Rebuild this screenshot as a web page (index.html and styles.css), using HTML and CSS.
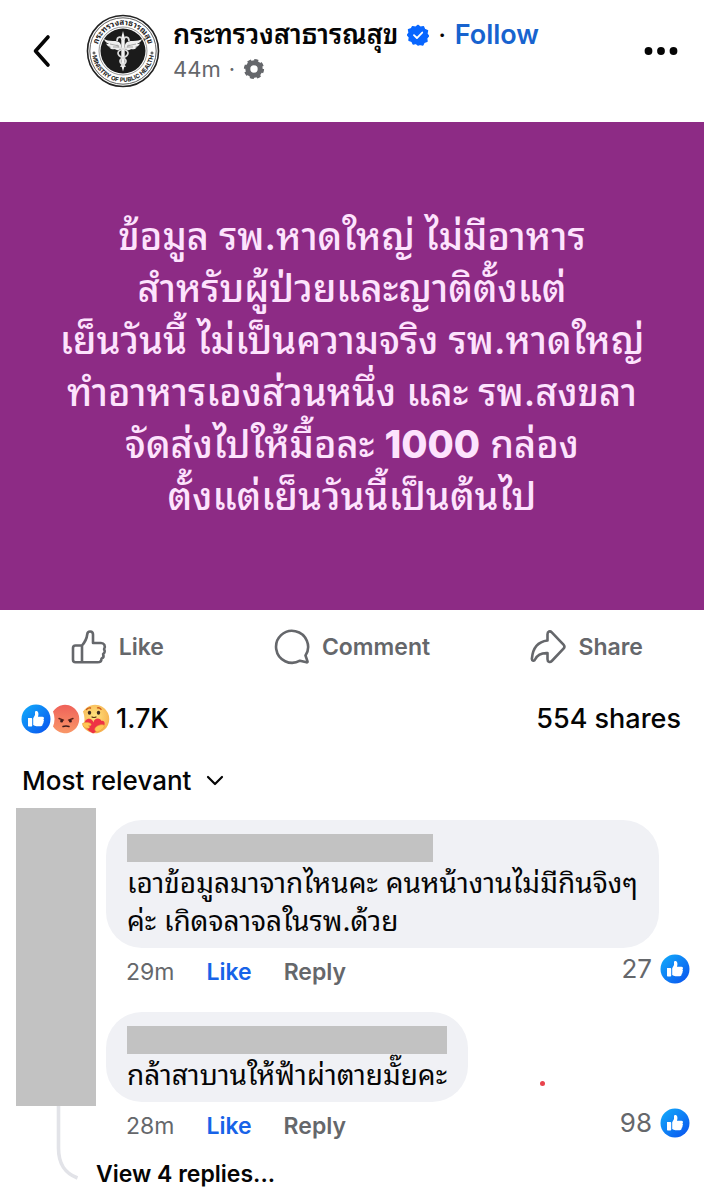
FILE: index.html
```html
<!DOCTYPE html>
<html lang="th">
<head>
<meta charset="utf-8">
<meta name="viewport" content="width=device-width, initial-scale=1">
<title>กระทรวงสาธารณสุข</title>
<link rel="stylesheet" href="styles.css">
</head>
<body>
<svg class="defs" width="0" height="0" aria-hidden="true">
  <defs>
    <linearGradient id="blue" x1="0" y1="0" x2="1" y2="1"><stop offset="0" stop-color="#12aefb"/><stop offset="1" stop-color="#0a50ee"/></linearGradient>
    <linearGradient id="angry" x1="0" y1="0" x2="0" y2="1"><stop offset="0" stop-color="#ef6159"/><stop offset="1" stop-color="#f99768"/></linearGradient>
    <radialGradient id="care" cx=".45" cy=".4" r=".65"><stop offset="0" stop-color="#ffe37e"/><stop offset="1" stop-color="#f6ae4c"/></radialGradient>
    <symbol id="like-badge" viewBox="0 0 30 30">
      <circle cx="15" cy="15" r="14.5" fill="url(#blue)"/>
      <path fill="#fff" d="M7 14.1h3.400c.5 0 .8.3.8.8v6.900c0 .5-.3.8-.8.8H7.800a.8.8 0 0 1-.8-.8zM12.200 14.200l1.800-3.100V8.300c0-1.700 2.900-1.700 3.300.6.300 1.500 0 2.700-.4 3.900h4.400c1.900 0 2.100 2 1.100 2.600.8.700.7 1.900-.1 2.400.5.900.1 1.800-.7 2.200.2 1.300-.6 2.200-1.900 2.200h-4.300c-1.300 0-2.300-.4-3.200-1.100z"/>
    </symbol>
  </defs>
</svg>
<main class="page">
  <header class="header">
    <button class="icon-button" type="button" aria-label="Back">
      <svg width="20" height="34" viewBox="0 0 20 34"><path d="M16 3 3.500 17 16 31" fill="none" stroke="#050505" stroke-width="3.600" stroke-linecap="round" stroke-linejoin="round"/></svg>
    </button>
    <svg class="seal" viewBox="0 0 74 74" role="img" aria-label="Ministry of Public Health">
      <circle cx="37" cy="37" r="35.500" fill="#fff" stroke="#222" stroke-width="1.600"/>
      <circle cx="37" cy="37" r="33.200" fill="none" stroke="#333" stroke-width=".8"/>
      <circle cx="37" cy="37" r="22.500" fill="#1b1b1b"/>
      <circle cx="37" cy="37" r="24" fill="none" stroke="#555" stroke-width=".6"/>
      <path id="arc-top" d="M11 37a26 26 0 0 1 52 0" fill="none"/>
      <path id="arc-bottom" d="M6 37a31 31 0 0 0 62 0" fill="none"/>
      <text class="seal-thai"><textPath href="#arc-top" startOffset="50%">กระทรวงสาธารณสุข</textPath></text>
      <text class="seal-latin"><textPath href="#arc-bottom" startOffset="50%">MINISTRY OF PUBLIC HEALTH</textPath></text>
      <path d="M8 37.500v3M6.500 39h3M66 37.500v3M64.500 39h3" stroke="#333" stroke-width="1"/>
      <path fill="#eee" d="M35 31c-1-4-5-4-8-4-4 0-7-1-9-2 1 3 3 4 5 5-1 0-2 0-3-.5 1 2.500 3 3.500 5 3.500-1 .5-2 .5-2 .5 2 2 5 2 6 1.500 1 1.500 4 1.500 6 0zM39 31c1-4 5-4 8-4 4 0 7-1 9-2-1 3-3 4-5 5 1 0 2 0 3-.5-1 2.500-3 3.500-5 3.500 1 .5 2 .5 2 .5-2 2-5 2-6 1.500-1 1.500-4 1.500-6 0z"/>
      <path fill="#f3f3f3" d="m37 17 1.700 6.500v28L37 57.500l-1.700-6v-28z"/>
      <path d="M31 27c0-5 5-5 5-1M43 27c0-5-5-5-5-1M31 30c0 6 11 4 11 9s-8 4-8 8 5 3 5 6M43 30c0 6-11 4-11 9s8 4 8 8-5 3-5 6" fill="none" stroke="#ddd" stroke-width="1.700"/>
      <path d="M24 30l9 2M50 30l-9 2M27 33h6M47 33h-6" stroke="#777" stroke-width=".6"/>
    </svg>
    <div class="identity">
      <div class="name-row">
        <h1 class="name">กระทรวงสาธารณสุข</h1>
        <svg class="verified" viewBox="0 0 24 24" role="img" aria-label="Verified"><path fill="#0866ff" stroke="#0866ff" stroke-width="1.500" stroke-linejoin="round" d="m12 1.500 2.700 2 3.300-.6 1.200 3.100 3.200 1.200-.7 3.300 1.800 2.500-2.100 2.500.5 3.300-3.200 1.100-1.400 3-3.200-.7L12 23l-2.100-1.800-3.200.7-1.400-3-3.200-1.100.5-3.300-2.100-2.500 1.800-2.500-.7-3.300L4.800 5 6 2.900l3.300.6z"/><path d="m7.600 12.200 3.200 3.100 5.800-6" fill="none" stroke="#fff" stroke-width="2" stroke-linecap="round" stroke-linejoin="round"/></svg>
        <span class="dot">·</span>
        <button class="follow" type="button">Follow</button>
      </div>
      <div class="time-row">
        <span>44m</span><span>·</span>
        <svg width="22" height="22" viewBox="0 0 22 22" role="img" aria-label="Custom audience"><circle cx="11" cy="11" r="6.200" fill="none" stroke="#65676b" stroke-width="5"/><circle cx="11" cy="11" r="8.300" fill="none" stroke="#65676b" stroke-width="3.600" stroke-dasharray="3.700 2.819"/></svg>
      </div>
    </div>
    <button class="icon-button more" type="button" aria-label="More">
      <svg width="34" height="10" viewBox="0 0 34 10" fill="#050505"><circle cx="4.500" cy="5" r="3.900"/><circle cx="17" cy="5" r="3.900"/><circle cx="29.500" cy="5" r="3.900"/></svg>
    </button>
  </header>

  <article class="post">
    <p class="post-text">ข้อมูล รพ.หาดใหญ่ ไม่มีอาหาร<br>สำหรับผู้ป่วยและญาติตั้งแต่<br>เย็นวันนี้ ไม่เป็นความจริง รพ.หาดใหญ่<br>ทำอาหารเองส่วนหนึ่ง และ รพ.สงขลา<br>จัดส่งไปให้มื้อละ <b>1000</b> กล่อง<br>ตั้งแต่เย็นวันนี้เป็นต้นไป</p>
  </article>

  <div class="actions">
    <button class="action" type="button">
      <svg width="36" height="36" viewBox="0 0 36 36"><path d="M11 16.500v16.800M11 16.500H4.500a2.500 2.500 0 0 0-2.500 2.500v11.800a2.500 2.500 0 0 0 2.500 2.500h22c3 0 4-1.500 4-3.600 2-1 2.300-3 1.600-4.500 1.800-1.200 2-3.500 1-5 1.800-3.300 0-6.200-3.100-6.200h-8V5.500c0-4-5.300-4-5.700-.5-.5 4.500-1.800 7.500-5.300 11.500z" fill="none" stroke="#65676b" stroke-width="2.600" stroke-linejoin="round"/></svg>
      <span>Like</span>
    </button>
    <button class="action" type="button">
      <svg width="36" height="36" viewBox="0 0 36 36"><path d="M31.500 26.500A16 16 0 1 0 26 31.700l6.500 1.600c.8.200 1.200-.3 1-1z" fill="none" stroke="#65676b" stroke-width="2.600" stroke-linejoin="round"/></svg>
      <span>Comment</span>
    </button>
    <button class="action" type="button">
      <svg width="36" height="36" viewBox="0 0 36 36"><path d="M17.500 11.500V5.200c0-2.700 2.500-3.700 4.300-1.900L33.500 15.700c1.200 1.300 1.200 2.700 0 4L21.800 32c-1.800 1.900-4.300.9-4.300-1.700v-6.200c-6.500-.3-10 1.500-12.300 6.200-1 2.200-3.500 1.800-3.300-.6.800-10.500 5.600-17 15.600-18.200z" fill="none" stroke="#65676b" stroke-width="2.600" stroke-linejoin="round"/></svg>
      <span>Share</span>
    </button>
  </div>

  <div class="summary">
    <div class="reactions">
      <svg class="badge" role="img" aria-label="Like"><use href="#like-badge"/></svg>
      <svg class="badge" viewBox="0 0 30 30" role="img" aria-label="Angry"><path d="M2 7.500A14.200 14.200 0 1 1 2 22.500 20 20 0 0 0 2 7.500z" fill="url(#angry)"/><path d="m8 14.500 4.500 1.600M22 14.500l-4.500 1.600" stroke="#5b2216" stroke-width="1.400" stroke-linecap="round"/><ellipse cx="10.600" cy="17.100" rx="1.500" ry="1.500" fill="#3c1b1b"/><ellipse cx="19.400" cy="17.100" rx="1.500" ry="1.500" fill="#3c1b1b"/><path d="M12 22.500q3-.8 6 0" fill="none" stroke="#3c1b1b" stroke-width="1.500" stroke-linecap="round"/></svg>
      <svg class="badge" viewBox="0 0 30 30" role="img" aria-label="Care"><path d="M2 7.500A14.200 14.200 0 1 1 2 22.500 20 20 0 0 0 2 7.500z" fill="url(#care)"/><path d="M5.500 5.500q2-2 4-1.500M16.500 3.800q2.200-.3 3.600 1.500" fill="none" stroke="#c95718" stroke-width="1.300" stroke-linecap="round"/><ellipse cx="8.500" cy="8.800" rx="1.700" ry="2" fill="#3b2a20"/><ellipse cx="17.500" cy="8.800" rx="1.700" ry="2" fill="#3b2a20"/><path d="M11 13q2 1 4 0" fill="none" stroke="#5b3413" stroke-width="1.200" stroke-linecap="round"/><path fill="#ee3345" d="M12.500 18.500c.5-5 7-5 8-1.500 3.500-1 4.500 4 1 7L12 29.500C6 26 1.500 21 4.500 16.500c2.500-3 7-2 8 2z"/><path fill="#ffc755" stroke="#e9983c" stroke-width=".6" d="M1.500 19.500c2-1.500 7-1.500 8.500.5.700 1.500-.7 2-2.500 1.800 2 1.200 1 3-1.500 2.500C3 24 1.500 22 1.500 19.500zM14 24.500c1-2.500 6-4.500 8.500-3.500 1.500.7 1 2.500-1 4-2 1.700-5 3.500-6.500 2.500-.8-.5-1.500-2-1-3z"/></svg>
      <span class="count">1.7K</span>
    </div>
    <span class="count">554 shares</span>
  </div>

  <div class="sort">
    <select class="sort-select" aria-label="Comment order"><option>Most relevant</option></select>
    <svg width="18" height="12" viewBox="0 0 18 12"><path d="m2 2 7 7 7-7" fill="none" stroke="#050505" stroke-width="2.200" stroke-linecap="round" stroke-linejoin="round"/></svg>
  </div>

  <section class="comments">
    <div class="rail">
      <div class="avatar-mask"></div>
      <svg class="thread" width="24" height="74" viewBox="0 0 24 74"><path d="M2.500 0v42c0 16 6 25 19 30" fill="none" stroke="#e2e3e8" stroke-width="3.600"/></svg>
    </div>
    <div class="thread-list">
      <div class="comment">
        <div class="bubble">
          <div class="name-mask name-mask-first"></div>
          <p class="comment-text">เอาข้อมูลมาจากไหนคะ คนหน้างานไม่มีกินจิงๆ<br>ค่ะ เกิดจลาจลในรพ.ด้วย</p>
        </div>
        <div class="meta">
          <span>29m</span>
          <button class="meta-button liked" type="button">Like</button>
          <button class="meta-button" type="button">Reply</button>
          <span class="likes">27 <svg class="badge" role="img" aria-label="likes"><use href="#like-badge"/></svg></span>
        </div>
      </div>
      <div class="comment">
        <div class="bubble-row">
          <div class="bubble">
            <div class="name-mask"></div>
            <p class="comment-text">กล้าสาบานให้ฟ้าผ่าตายมั๊ยคะ</p>
          </div>
          <span class="mark"></span>
        </div>
        <div class="meta">
          <span>28m</span>
          <button class="meta-button liked" type="button">Like</button>
          <button class="meta-button" type="button">Reply</button>
          <span class="likes">98 <svg class="badge" role="img" aria-label="likes"><use href="#like-badge"/></svg></span>
        </div>
      </div>
      <button class="replies" type="button">View 4 replies...</button>
    </div>
  </section>
</main>
</body>
</html>
```
FILE: styles.css
```css
* { box-sizing: border-box; }
body { margin: 0; background: #fff; color: #050505; font-family: Inter, "Noto Sans Thai Looped", Thonburi, Loma, "Noto Sans Thai", "Noto Sans", sans-serif; font-size: 23px; line-height: 32px; }
button, select { margin: 0; padding: 0; border: 0; background: none; color: inherit; font: inherit; }
h1, p { margin: 0; }
svg { display: block; flex: none; }
.defs { position: absolute; }

.header { display: flex; align-items: center; height: 122px; padding: 0 26px 20px 32px; }
.icon-button { display: flex; }
.seal { width: 74px; height: 74px; margin-left: 34px; }
.seal-thai, .seal-latin { text-anchor: middle; fill: #222; font-weight: 700; }
.seal-thai { font-size: 8px; }
.seal-latin { font-size: 6px; }
.identity { margin-left: 13px; }
.name-row { display: flex; align-items: center; gap: 9px; height: 36px; white-space: nowrap; }
.name { font-size: 27px; font-weight: 600; line-height: 36px; }
.verified { width: 22px; height: 22px; }
.dot { font-weight: 600; }
.follow { color: #1763cf; font-size: 27px; font-weight: 600; }
.time-row { display: flex; align-items: center; gap: 8px; color: #65676b; font-size: 22px; }
.more { margin-left: auto; }

.post { display: flex; justify-content: center; align-items: center; min-height: 488px; background: #8d2b85; color: #fde3fd; }
.post-text { font-size: 38px; font-weight: 500; line-height: 52px; text-align: center; white-space: nowrap; }
.post-text b { font-weight: 800; }

.actions { display: grid; grid-template-columns: repeat(3, 1fr); padding: 19px 0 18px; color: #65676b; }
.action { display: flex; justify-content: center; align-items: center; gap: 12px; font-weight: 600; }

.summary { display: flex; justify-content: space-between; align-items: center; height: 72px; padding: 0 23px 0 21px; }
.reactions { display: flex; align-items: center; }
.badge { width: 30px; height: 30px; }
.count { font-size: 27px; font-weight: 500; }
.reactions .count { margin-left: 5px; }

.sort { display: flex; align-items: center; gap: 14px; height: 52px; padding-left: 22px; }
.sort-select { appearance: none; font-size: 26px; font-weight: 500; }

.comments { display: grid; grid-template-columns: 80px 1fr; padding: 1px 14px 0 16px; }
.rail { display: flex; flex-direction: column; }
.avatar-mask { flex: 1; background: #c2c2c2; }
.thread { margin-left: 40px; margin-bottom: 10px; }
.comment { padding: 12px 0 4px 10px; }
.bubble { width: fit-content; padding: 14px 21px 8px; border-radius: 36px; background: #f0f1f5; }
.bubble-row { display: flex; align-items: flex-end; gap: 72px; }
.name-mask { height: 28px; margin-bottom: 2px; background: #c2c2c2; }
.name-mask-first { width: 60%; }
.comment-text { font-size: 28px; line-height: 38px; white-space: nowrap; }
.mark { width: 5px; height: 5px; margin-bottom: 16px; border-radius: 50%; background: #e8434c; }
.meta { display: flex; align-items: center; gap: 32px; height: 48px; padding-left: 20px; color: #65676b; }
.meta-button { font-weight: 600; }
.liked { color: #1763e8; }
.likes { display: flex; align-items: center; gap: 8px; margin-left: auto; padding-bottom: 6px; font-size: 26px; }
.replies { display: block; margin-top: 4px; font-weight: 600; }
```
